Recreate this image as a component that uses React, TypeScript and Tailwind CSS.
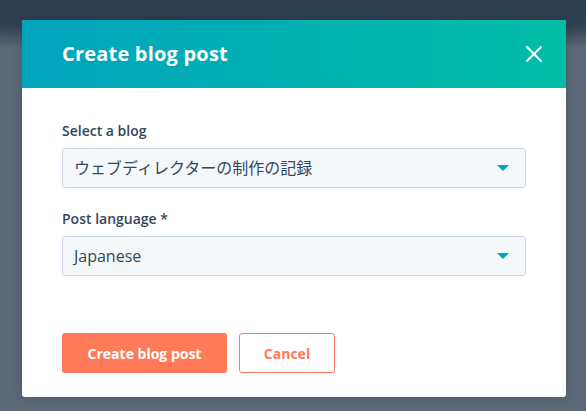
import React from "react";

const Caret = () => (
  <svg width="12" height="6" viewBox="0 0 12 6" className="shrink-0">
    <path d="M0 0 L12 0 L6 6 Z" fill="#00a4bd" />
  </svg>
);

const Select = ({ value }: { value: string }) => (
  <div className="flex h-[40px] items-center justify-between rounded-[3px] border border-[#cbd6e2] bg-[#f5f8fa] pl-[11px] pr-[16px]">
    <span className="text-[16px] leading-[22px] text-[#33475b]">{value}</span>
    <Caret />
  </div>
);

export default function App() {
  return (
    <div
      className="relative h-[411px] w-[586px] overflow-hidden bg-[#5b6875]"
      style={{ fontFamily: '"Open Sans", "Noto Sans CJK JP", sans-serif' }}
    >
      <div className="absolute inset-x-0 top-0 h-[48px] bg-gradient-to-b from-[#2d3d50] via-[#2f3f51] to-[#5b6875]" />
      <div className="relative pl-[22px] pt-[20px]">
        <div className="w-[544px] overflow-hidden rounded-[3px] bg-white shadow-[0_0_12px_rgba(0,0,0,0.15)]">
          <div className="flex h-[68px] items-center justify-between bg-gradient-to-r from-[#00a4bd] to-[#00bda5] pl-[40px] pr-[24px]">
            <h1 className="text-[20px] font-bold leading-[28px] tracking-[0.2px] text-white">Create blog post</h1>
            <svg width="16" height="16" viewBox="0 0 16 16">
              <path d="M1 1 L15 15 M15 1 L1 15" stroke="white" strokeWidth="2" strokeLinecap="square" />
            </svg>
          </div>
          <div className="px-[40px] pb-[24px] pt-[33px]">
            <label className="mb-[7px] block text-[14px] font-semibold leading-[20px] text-[#33475b]">Select a blog</label>
            <Select value="ウェブディレクターの制作の記録" />
            <label className="mb-[7px] mt-[21px] block text-[14px] font-semibold leading-[20px] text-[#33475b]">
              Post language *
            </label>
            <Select value="Japanese" />
            <div className="mt-[57px] flex gap-[12px]">
              <button className="h-[40px] w-[165px] rounded-[3px] bg-[#ff7a59] text-[14px] font-bold text-white">
                Create blog post
              </button>
              <button className="h-[40px] w-[96px] rounded-[3px] border border-[#ff7a59] bg-white text-[14px] font-bold text-[#ff7a59]">
                Cancel
              </button>
            </div>
          </div>
        </div>
      </div>
    </div>
  );
}
